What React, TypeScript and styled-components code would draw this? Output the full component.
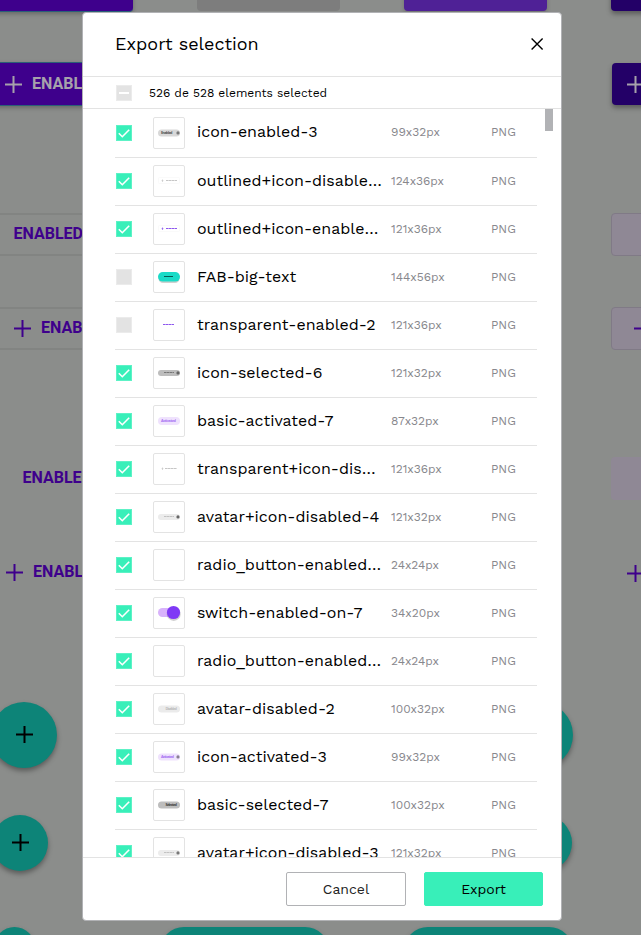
import React from "react";
import styled, { createGlobalStyle, css } from "styled-components";

const GlobalStyle = createGlobalStyle`
  * { box-sizing: border-box; }
  html, body { margin: 0; padding: 0; overflow: hidden; }
  body { font-family: "Work Sans", Inter, "Noto Sans", sans-serif; background: #8b8d8b; }
`;

const Screen = styled.div`
  position: relative;
  width: 641px;
  height: 935px;
  overflow: hidden;
  background: #8b8d8b;
`;

/* ---- free canvas behind the dialog ---- */

type Tone = "solid" | "dark" | "focus" | "off" | "outline" | "tinted" | "tintedFlat" | "plain";

const tones = {
  solid: css`background: #3e008c; color: #a6a2ab; border: 1px solid #2b5f78; border-width: 1px 0; box-shadow: 0 2px 4px rgba(0, 0, 0, 0.25);`,
  dark: css`background: #230067; color: #a6a2ab; box-shadow: 0 3px 5px rgba(0, 0, 0, 0.35);`,
  focus: css`background: #4f2196; color: #a6a2ab; box-shadow: 0 2px 4px rgba(0, 0, 0, 0.2);`,
  off: css`background: #7d7d7d; color: #6d6d6d;`,
  outline: css`border: 2px solid #828482; color: #3e008c;`,
  tinted: css`background: #8f8895; border: 1px solid #807a86; color: #3e008c;`,
  tintedFlat: css`background: #8f8895; color: #3e008c;`,
  plain: css`color: #3e008c;`,
};

const CanvasButton = styled.div<{ $x: number; $y: number; $w: number; $h: number; $pad?: number; $tone: Tone }>`
  position: absolute;
  left: ${(p) => p.$x}px;
  top: ${(p) => p.$y}px;
  width: ${(p) => p.$w}px;
  height: ${(p) => p.$h}px;
  padding: 0 0 1px ${(p) => p.$pad ?? 0}px;
  display: flex;
  align-items: center;
  gap: 10px;
  border-radius: 4px;
  font: 700 16px/20px Roboto, sans-serif;
  white-space: nowrap;
  overflow: hidden;
  ${(p) => tones[p.$tone]}
`;

const Fab = styled.div<{ $x: number; $y: number; $w: number; $h: number }>`
  position: absolute;
  left: ${(p) => p.$x}px;
  top: ${(p) => p.$y}px;
  width: ${(p) => p.$w}px;
  height: ${(p) => p.$h}px;
  padding: 0 0 2px 0;
  display: flex;
  align-items: center;
  justify-content: center;
  border-radius: 40px;
  background: #0d8478;
  color: #000;
  box-shadow: 0 3px 5px rgba(0, 0, 0, 0.35);
`;

const PlusSvg = styled.svg<{ $drop?: number }>`
  flex: none;
  width: 17px;
  height: 17px;
  margin-top: ${(p) => p.$drop ?? 1}px;
`;

const Plus = ({ drop }: { drop?: number }) => (
  <PlusSvg $drop={drop} viewBox="0 0 17 17" fill="none" stroke="currentColor" strokeWidth="2">
    <path d="M8.5 0v17M0 8.5h17" />
  </PlusSvg>
);

/* ---- dialog ---- */

const Dialog = styled.section`
  position: absolute;
  left: 82px;
  top: 12px;
  width: 480px;
  height: 909px;
  display: flex;
  flex-direction: column;
  background: #fff;
  border: 1px solid #b1b2b5;
  border-radius: 4px;
  overflow: hidden;
  color: #000;
`;

const Header = styled.header`
  flex: none;
  height: 64px;
  padding: 0 16px 1px 32px;
  display: flex;
  align-items: center;
  justify-content: space-between;
  border-bottom: 1px solid #e3e3e3;
`;

const Title = styled.h1`
  margin: 0 0 2px;
  font-size: 18px;
  font-weight: 400;
`;

const CloseButton = styled.button`
  width: 16px;
  height: 16px;
  padding: 0;
  border: 0;
  background: none;
  display: flex;
`;

const Summary = styled.div`
  flex: none;
  height: 32px;
  padding-left: 33px;
  display: flex;
  align-items: center;
  gap: 17px;
  border-bottom: 1px solid #e3e3e3;
  font-size: 12px;
`;

const Body = styled.div`
  flex: 1;
  min-height: 0;
  display: flex;
  justify-content: space-between;
  overflow: hidden;
  padding: 1px 8px 0 32px;
`;

const List = styled.ul`
  width: 422px;
  margin: 0;
  padding: 0;
  list-style: none;
`;

const Row = styled.li`
  height: 48px;
  padding: 7px 0 0 1px;
  display: grid;
  grid-template-columns: 37px 44px 194px 100px 1fr;
  border-bottom: 1px solid #e3e3e3;
`;

const Cell = styled.div<{ $muted?: boolean }>`
  height: 32px;
  line-height: 32px;
  white-space: nowrap;
  font-size: ${(p) => (p.$muted ? "12px" : "16px")};
  color: ${(p) => (p.$muted ? "#88888d" : "#000")};

  ${Row}:first-child & { line-height: 30px; }
`;

const Check = styled.div<{ $on?: boolean }>`
  flex: none;
  width: 16px;
  height: 16px;
  background: ${(p) => (p.$on ? "#38efb9" : "#e3e3e3")};
  border: 1px solid ${(p) => (p.$on ? "#5df2c6" : "#ebebeb")};
  display: flex;

  ${Row} & { margin-top: 8px; }
`;

const Thumb = styled.div`
  width: 32px;
  height: 32px;
  border: 1px solid #e3e3e3;
  border-radius: 2px;
  display: flex;
  font-family: "Noto Sans", sans-serif;
`;

const ScrollThumb = styled.div`
  width: 8px;
  height: 22px;
  margin-top: -1px;
  background: #b1b2b5;
`;

const Footer = styled.footer`
  flex: none;
  height: 63px;
  padding: 14px 18px 0 0;
  display: flex;
  justify-content: flex-end;
  gap: 18px;
  border-top: 1px solid #e3e3e3;
`;

const Action = styled.button<{ $primary?: boolean }>`
  width: ${(p) => (p.$primary ? 119 : 120)}px;
  height: 34px;
  padding: 0;
  display: flex;
  align-items: center;
  justify-content: center;
  border-radius: 2px;
  border: 1px solid ${(p) => (p.$primary ? "#38efb9" : "#b1b2b5")};
  background: ${(p) => (p.$primary ? "#38efb9" : "#fff")};
  color: ${(p) => (p.$primary ? "#000" : "#222")};
  font: 14px "Work Sans", Inter, "Noto Sans", sans-serif;
`;

const Tick = () => (
  <svg width="14" height="14" viewBox="0 0 14 14" fill="none" stroke="#fff" strokeWidth="1.6">
    <path d="M1.8 7.3l3.5 3.4 6.9-7" />
  </svg>
);

const Dash = () => (
  <svg width="14" height="14" viewBox="0 0 14 14">
    <path d="M2 6h10v2H2z" fill="#fff" />
  </svg>
);

interface Art {
  fill?: string;
  h?: number;
  ink?: string;
  word?: string;
  from?: number;
  to?: number;
  dot?: string;
  lead?: boolean;
  frame?: string;
  kind?: "fab" | "switch";
}

function Preview({ art }: { art: Art }) {
  const { fill, h = 6, ink, word, from = 10, to = 20, dot, lead, frame, kind } = art;
  if (kind === "switch") {
    return (
      <svg width="30" height="30" viewBox="0 0 30 30">
        <rect x="4" y="10" width="18" height="9" rx="4.5" fill="#d8b2fb" />
        <circle cx="19.7" cy="15.9" r="7" fill="#777" opacity=".35" />
        <circle cx="19.5" cy="14.5" r="6.6" fill="#7f39f5" />
      </svg>
    );
  }
  if (kind === "fab") {
    return (
      <svg width="30" height="30" viewBox="0 0 30 30">
        <rect x="4.5" y="12" width="21" height="9" rx="4.5" fill="#777" opacity=".35" />
        <rect x="4" y="10" width="22" height="9.6" rx="4.8" fill="#1adbc7" />
        <path d="M10 14.5h9" stroke="#075b53" />
      </svg>
    );
  }
  return (
    <svg width="30" height="30" viewBox="0 0 30 30">
      {frame && <rect x="4.5" y="11.5" width="21" height="6" rx="1" fill="none" stroke={frame} />}
      {fill && <rect x="4" y={15 - h / 2} width="22" height={h} rx={h / 2} fill={fill} />}
      {word && (
        <text x={from} y="16.1" fontSize="3.8" fontWeight="700" fill={ink} textLength={to - from}>
          {word}
        </text>
      )}
      {!word && ink && <path d={`M${from} 14.5H${to}`} stroke={ink} strokeWidth="1" strokeDasharray="2.6 .3" />}
      {lead && <path d="M8.5 13.5v2.4M7.6 14.6h1.8" stroke={ink} strokeWidth=".7" />}
      {dot && <circle cx="24" cy="14.9" r="1.6" fill={dot} />}
    </svg>
  );
}

interface Item {
  name: string;
  size: string;
  off?: boolean;
  art?: Art;
}

const items: Item[] = [
  { name: "icon-enabled-3", size: "99x32px", art: { fill: "#d8d8d8", h: 7, ink: "#555", word: "Enabled", from: 7, to: 18.5, dot: "#777" } },
  { name: "outlined+icon-disable…", size: "124x36px", art: { frame: "#fafafa", ink: "#c6c6c6", from: 12, to: 23, lead: true } },
  { name: "outlined+icon-enable…", size: "121x36px", art: { frame: "#fafafa", ink: "#8d57ee", from: 12, to: 23, lead: true } },
  { name: "FAB-big-text", size: "144x56px", off: true, art: { kind: "fab" } },
  { name: "transparent-enabled-2", size: "121x36px", off: true, art: { ink: "#8d57ee", from: 9, to: 20 } },
  { name: "icon-selected-6", size: "121x32px", art: { fill: "#bdbdbd", ink: "#777", from: 10, to: 20, dot: "#666" } },
  { name: "basic-activated-7", size: "87x32px", art: { fill: "#efe2fd", h: 8, ink: "#a874f3", word: "Activated", from: 7, to: 22 } },
  { name: "transparent+icon-dis…", size: "121x36px", art: { ink: "#c6c6c6", from: 11, to: 23, lead: true } },
  { name: "avatar+icon-disabled-4", size: "121x32px", art: { fill: "#ececec", ink: "#c2c2c2", from: 10, to: 20, dot: "#666" } },
  { name: "radio_button-enabled…", size: "24x24px" },
  { name: "switch-enabled-on-7", size: "34x20px", art: { kind: "switch" } },
  { name: "radio_button-enabled…", size: "24x24px" },
  { name: "avatar-disabled-2", size: "100x32px", art: { fill: "#ebebeb", h: 7, ink: "#bdbdbd", word: "Disabled", from: 11.5, to: 23 } },
  { name: "icon-activated-3", size: "99x32px", art: { fill: "#efe2fd", h: 7, ink: "#a874f3", word: "Activated", from: 7, to: 20, dot: "#887f92" } },
  { name: "basic-selected-7", size: "100x32px", art: { fill: "#bdbdbd", h: 7, ink: "#444", word: "Selected", from: 11.5, to: 23 } },
  { name: "avatar+icon-disabled-3", size: "121x32px", art: { fill: "#ececec", ink: "#c2c2c2", from: 10, to: 20, dot: "#777" } },
];

export default function App() {
  return (
    <Screen>
      <GlobalStyle />
      <CanvasButton $x={-20} $y={-30} $w={153} $h={42} $tone="solid" />
      <CanvasButton $x={197} $y={-30} $w={143} $h={41} $tone="off" />
      <CanvasButton $x={404} $y={-30} $w={143} $h={41} $tone="focus" />
      <CanvasButton $x={611} $y={-30} $w={143} $h={41} $tone="dark" />
      <CanvasButton $x={-20} $y={62} $w={160} $h={44} $pad={25} $tone="solid"><Plus />ENABLED</CanvasButton>
      <CanvasButton $x={612} $y={63} $w={143} $h={42} $pad={15} $tone="dark"><Plus /></CanvasButton>
      <CanvasButton $x={-20} $y={213} $w={160} $h={43} $pad={31.5} $tone="outline">ENABLED</CanvasButton>
      <CanvasButton $x={-20} $y={307} $w={160} $h={43} $pad={32} $tone="outline"><Plus />ENABLED</CanvasButton>
      <CanvasButton $x={611} $y={213} $w={143} $h={43} $tone="tinted" />
      <CanvasButton $x={611} $y={307} $w={143} $h={43} $pad={22} $tone="tinted"><Plus /></CanvasButton>
      <CanvasButton $x={-20} $y={457} $w={160} $h={42} $pad={42.5} $tone="plain">ENABLED</CanvasButton>
      <CanvasButton $x={-20} $y={551} $w={160} $h={42} $pad={26} $tone="plain"><Plus />ENABLED</CanvasButton>
      <CanvasButton $x={611} $y={457} $w={143} $h={43} $tone="tintedFlat" />
      <CanvasButton $x={627} $y={552} $w={60} $h={42} $tone="plain"><Plus /></CanvasButton>
      <Fab $x={-9} $y={702} $w={66} $h={66}><Plus /></Fab>
      <Fab $x={-8} $y={815} $w={56} $h={56}><Plus /></Fab>
      <Fab $x={507} $y={702} $w={66} $h={66} />
      <Fab $x={516} $y={815} $w={56} $h={56} />
      <Fab $x={-6} $y={927} $w={41} $h={41} />
      <Fab $x={160} $y={927} $w={169} $h={48} />
      <Fab $x={404} $y={927} $w={169} $h={48} />

      <Dialog>
        <Header>
          <Title>Export selection</Title>
          <CloseButton aria-label="Close">
            <svg width="16" height="16" viewBox="0 0 16 16" fill="none" stroke="#000" strokeWidth="1.4">
              <path d="M2.6 2.6l11 11M13.6 2.6l-11 11" />
            </svg>
          </CloseButton>
        </Header>
        <Summary>
          <Check><Dash /></Check>
          <span>526 de 528 elements selected</span>
        </Summary>
        <Body>
          <List>
            {items.map((item, i) => (
              <Row key={i}>
                <Check $on={!item.off}>{!item.off && <Tick />}</Check>
                <Thumb>{item.art && <Preview art={item.art} />}</Thumb>
                <Cell>{item.name}</Cell>
                <Cell $muted>{item.size}</Cell>
                <Cell $muted>PNG</Cell>
              </Row>
            ))}
          </List>
          <ScrollThumb />
        </Body>
        <Footer>
          <Action>Cancel</Action>
          <Action $primary>Export</Action>
        </Footer>
      </Dialog>
    </Screen>
  );
}
